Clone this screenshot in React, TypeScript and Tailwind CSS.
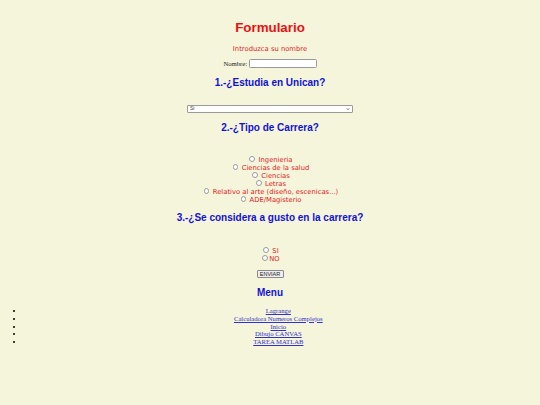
import React from 'react';

const carreras = [
  'Ingenieria',
  'Ciencias de la salud',
  'Ciencias',
  'Letras',
  'Relativo al arte (diseño, escenicas...)',
  'ADE/Magisterio',
];

const links = ['Lagrange', 'Calculadora Numeros Complejos', 'Inicio', 'Dibujo CANVAS', 'TAREA MATLAB'];

const Radio = ({ name }: { name: string }) => (
  <input
    type="radio"
    name={name}
    className="appearance-none inline-block align-[-0.5px] w-[5.6px] h-[5.6px] rounded-full border-[0.6px] border-[#9a9a9a] bg-white ml-[2px] mr-[1.3px]"
  />
);

const Heading = ({ children, className = '' }: { children: React.ReactNode; className?: string }) => (
  <h2 className={`text-center font-['Liberation_Sans',Arial,sans-serif] font-bold text-[10px] leading-[12px] text-[#1111d6] ${className}`}>
    {children}
  </h2>
);

export default function App() {
  return (
    <div className="min-h-screen w-full bg-[#f5f5dc] px-[3.33px] pt-[20px] pb-8">
      <h1 className="text-center font-['Liberation_Sans',Arial,sans-serif] font-bold text-[13.33px] leading-[15px] text-[#ea1111]">
        Formulario
      </h1>

      <form className="font-['DejaVu_Sans',Verdana,sans-serif] text-[6.8px] text-[#e42222]">
        <p className="mt-[9.5px] text-center leading-[8px]">Introduzca su nombre</p>

        <div className="mt-[6.5px] flex items-center justify-center h-[9px] font-['Liberation_Serif','Times_New_Roman',serif] text-[6.67px] text-[#222]">
          <span className="mr-[1.5px]">Nombre:</span>
          <input
            type="text"
            className="w-[68px] h-[9px] bg-white border-[0.6px] border-[#9a9a9a] rounded-[1.5px] outline-none"
          />
        </div>

        <Heading className="mt-[9px]">1.-¿Estudia en Unican?</Heading>

        <div className="mt-[16px] flex justify-center">
          <div className="relative w-[166px] h-[7.5px] bg-white border-[0.6px] border-[#9a9a9a] rounded-[1px] flex items-center px-[2px] font-['Liberation_Sans',Arial,sans-serif] text-[5px] text-[#444]">
            <span>Si</span>
            <svg viewBox="0 0 10 10" className="absolute right-[2px] top-[1.2px] w-[4px] h-[4px]">
              <path d="M2 3.5 L5 6.5 L8 3.5" fill="none" stroke="#333" strokeWidth="1.8" />
            </svg>
          </div>
        </div>

        <Heading className="mt-[9px]">2.-¿Tipo de Carrera?</Heading>

        <div className="mt-[22px] flex flex-col items-center">
          {carreras.map((c) => (
            <label key={c} className="leading-[8px] h-[8px] whitespace-nowrap">
              <Radio name="carrera" /> {c}
            </label>
          ))}
        </div>

        <Heading className="mt-[8px]">3.-¿Se considera a gusto en la carrera?</Heading>

        <div className="mt-[23px] flex flex-col items-center">
          <label className="leading-[8px] h-[8px]">
            <Radio name="gusto" /> SI
          </label>
          <label className="leading-[8px] h-[8px]">
            <Radio name="gusto" />NO
          </label>
        </div>

        <div className="mt-[7px] flex justify-center">
          <button
            type="button"
            className="w-[27px] h-[8px] bg-[#efefef] border-[0.6px] border-[#8a8a8a] rounded-[1px] font-['Liberation_Sans',Arial,sans-serif] text-[5.5px] leading-[6px] text-[#222]"
          >
            ENVIAR
          </button>
        </div>
      </form>

      <Heading className="mt-[9.5px]">Menu</Heading>

      <ul className="mt-[8px] pl-[16.67px] font-['Liberation_Serif','Times_New_Roman',serif] text-[6.67px] leading-[7.75px] text-black">
        {links.map((l) => (
          <li
            key={l}
            className="relative text-center before:content-[''] before:absolute before:left-[-7px] before:top-[3px] before:w-[2px] before:h-[2px] before:rounded-full before:bg-black"
          >
            <a href="#" className="underline text-[#3232c8]">
              {l}
            </a>
          </li>
        ))}
      </ul>
    </div>
  );
}
